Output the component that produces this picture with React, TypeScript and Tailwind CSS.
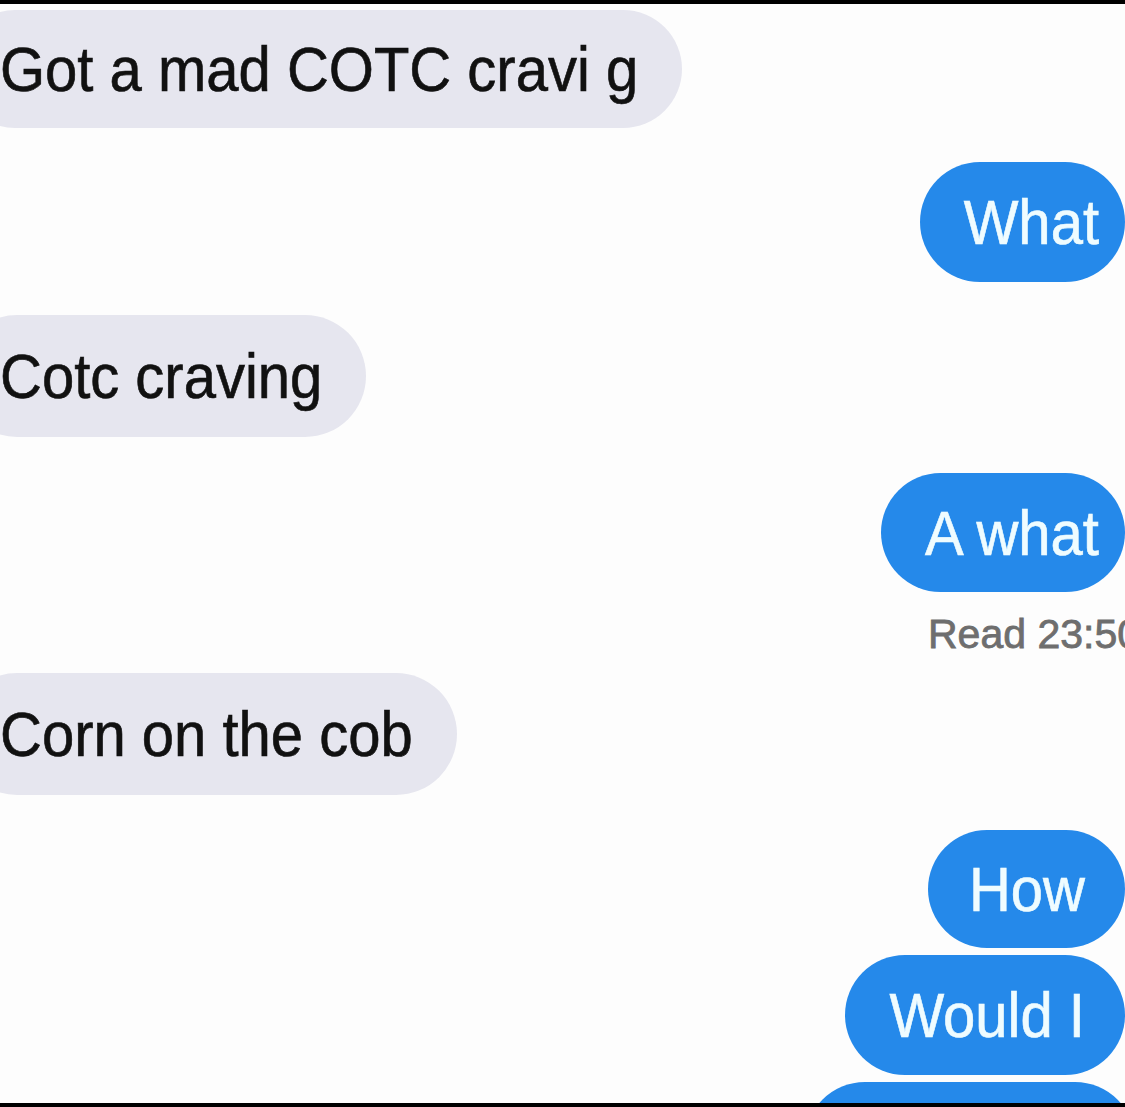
import React from 'react';

type Msg = {
  text: string;
  fromMe: boolean;
  className: string;
};

const font = { fontFamily: '"Liberation Sans", Arial, sans-serif' };

const messages: Msg[] = [
  { text: 'Got a mad COTC cravi g', fromMe: false, className: 'mt-[6px] h-[118px]' },
  { text: 'What', fromMe: true, className: 'mt-[34px] h-[120px] pl-[44px] pr-[26px]' },
  { text: 'Cotc craving', fromMe: false, className: 'mt-[33px] h-[122px]' },
  { text: 'A what', fromMe: true, className: 'mt-[36px] h-[119px] pl-[44px] pr-[26px]' },
];

const Bubble: React.FC<Msg> = ({ text, fromMe, className }) => (
  <div
    className={`flex shrink-0 items-center rounded-full whitespace-nowrap text-[58px] leading-none [-webkit-text-stroke:0.6px_currentColor] ${
      fromMe
        ? 'self-end bg-[#2589ea] text-[#effcff]'
        : 'self-start -ml-[44px] bg-[#e6e6ef] px-[44px] text-[#111]'
    } ${className}`}
  >
    <span className="inline-block scale-y-108">{text}</span>
  </div>
);

export default function App() {
  return (
    <div
      className="w-[1125px] h-[1107px] overflow-hidden bg-[#fdfdfd] border-t-4 border-b-4 border-black flex flex-col"
      style={font}
    >
      {messages.map((m) => (
        <Bubble key={m.text} {...m} />
      ))}

      {/* read receipt, runs off the right edge like the original */}
      <div className="mt-[22px] h-[40px] shrink-0 self-end -mr-[20px] w-[217px] whitespace-nowrap text-[41px] leading-none text-[#6e6e6e] [-webkit-text-stroke:0.8px_currentColor]">
        <span className="inline-block">Read 23:50</span>
      </div>

      <Bubble text="Corn on the cob" fromMe={false} className="mt-[19px] h-[122px]" />
      <Bubble text="How" fromMe={true} className="mt-[35px] h-[118px] pl-[41px] pr-[40px]" />
      <Bubble text="Would I" fromMe={true} className="mt-[7px] h-[120px] pl-[44px] pr-[40px]" />
      <div className="mt-[7px] h-[120px] w-[330px] shrink-0 self-end -mr-[10px] rounded-full bg-[#2589ea]" />
    </div>
  );
}
